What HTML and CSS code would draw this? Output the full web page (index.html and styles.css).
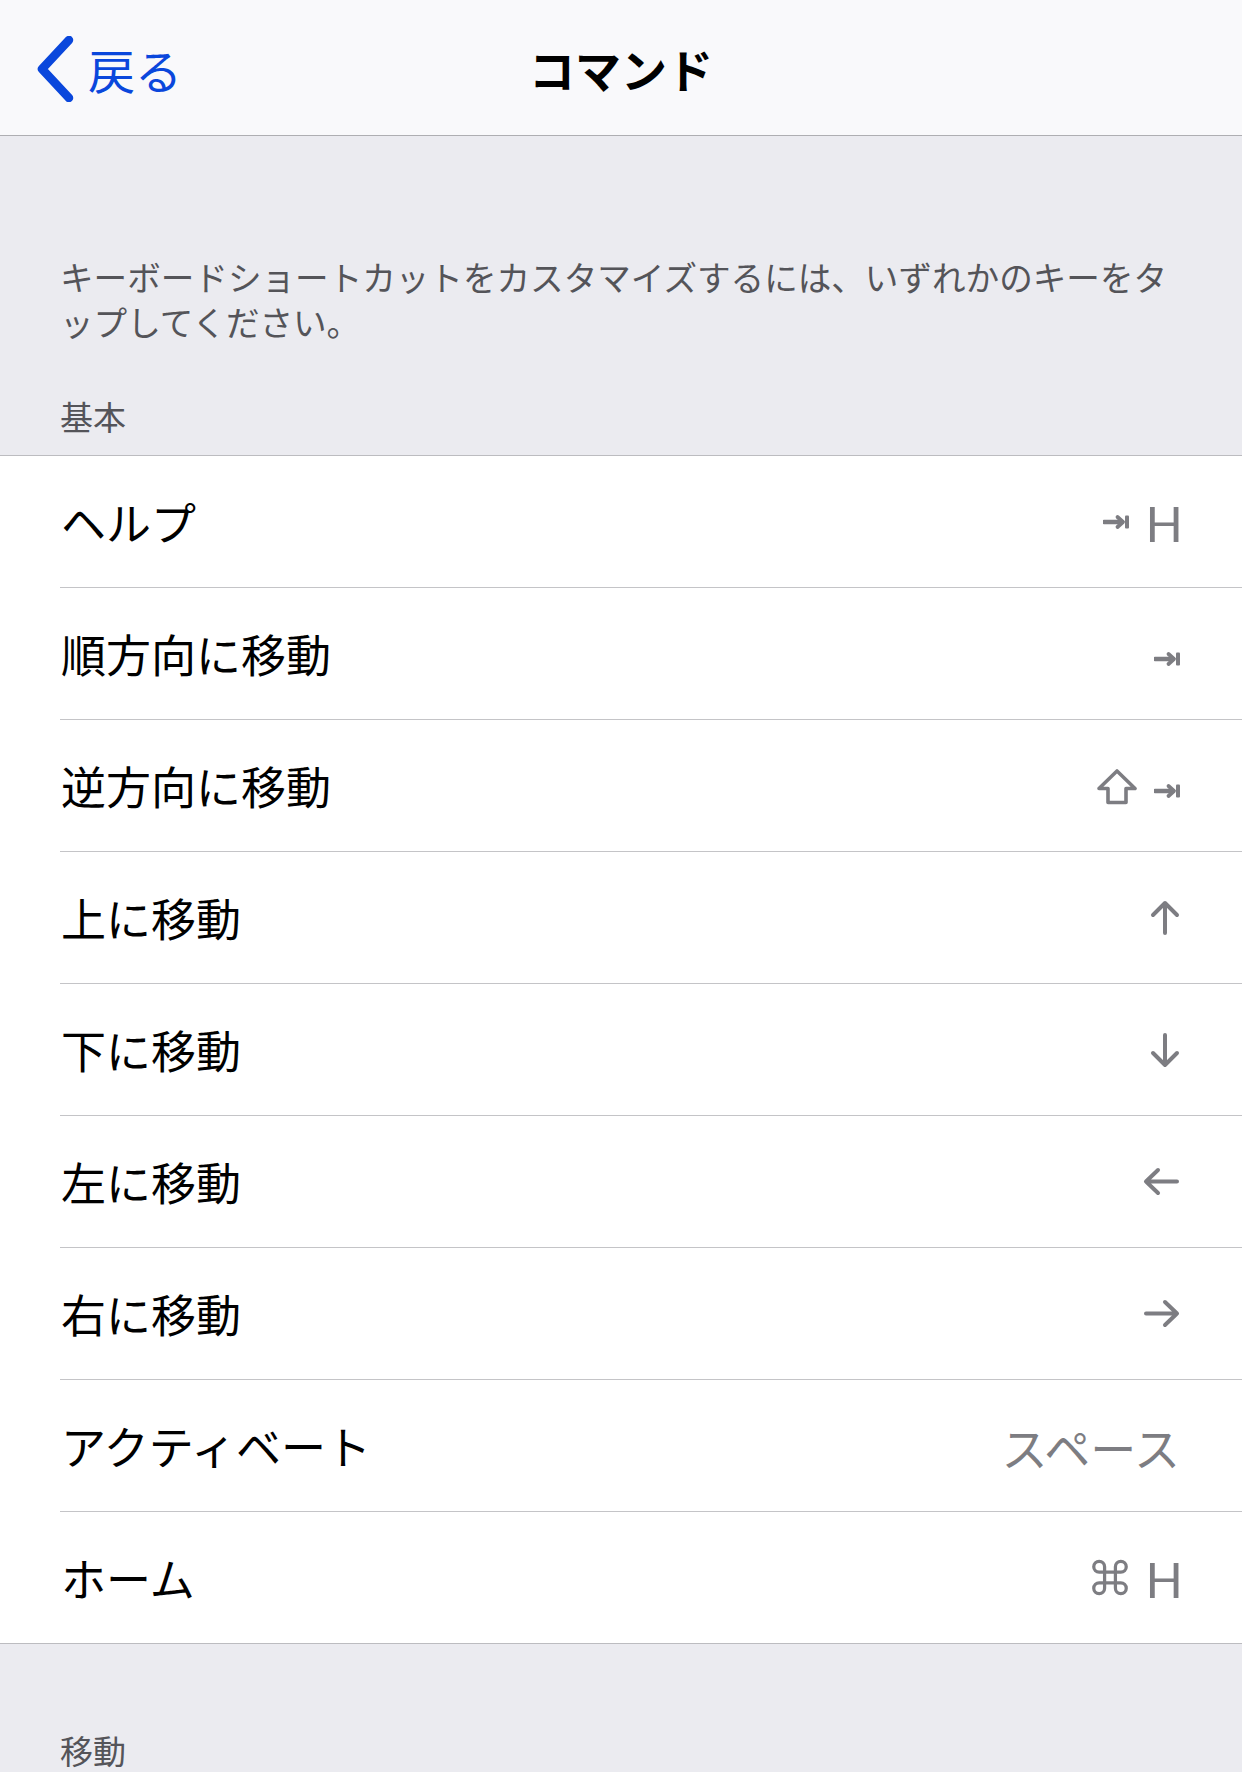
FILE: index.html
```html
<!DOCTYPE html>
<html lang="ja">
<head>
<meta charset="utf-8">
<title>コマンド</title>
<link rel="stylesheet" href="styles.css">
</head>
<body>
<header class="nav">
  <div class="back">
    <svg class="chev" width="44" height="66" viewBox="0 0 44 66"><path d="M35 4 L8 33 L35 62" fill="none" stroke="#0a47dc" stroke-width="8.5" stroke-linecap="round" stroke-linejoin="round"/></svg>
    <span class="back-label">戻る</span>
  </div>
  <h1 class="title">コマンド</h1>
</header>

<section class="group-head">
  <p class="footnote">キーボードショートカットをカスタマイズするには、いずれかのキーをタ<br>ップしてください。</p>
  <h2 class="section-title">基本</h2>
</section>

<ul class="list">
  <li class="row"><div class="row-inner"><span class="label">ヘルプ</span><span class="value">
    <svg class="tab" width="26" height="16" viewBox="0 0 26 16"><path d="M1 8 H19" stroke="#7d7d82" stroke-width="4.5" stroke-linecap="round"/><path d="M14.5 3 L20 8 L14.5 13" fill="none" stroke="#7d7d82" stroke-width="3.8" stroke-linecap="round" stroke-linejoin="round"/><rect x="22" y="1.5" width="4" height="13" rx="1" fill="#7d7d82"/></svg>
    <span class="key">H</span></span></div></li>
  <li class="row"><div class="row-inner"><span class="label">順方向に移動</span><span class="value">
    <svg class="tab low" width="26" height="16" viewBox="0 0 26 16"><path d="M1 8 H19" stroke="#7d7d82" stroke-width="4.5" stroke-linecap="round"/><path d="M14.5 3 L20 8 L14.5 13" fill="none" stroke="#7d7d82" stroke-width="3.8" stroke-linecap="round" stroke-linejoin="round"/><rect x="22" y="1.5" width="4" height="13" rx="1" fill="#7d7d82"/></svg>
  </span></div></li>
  <li class="row"><div class="row-inner"><span class="label">逆方向に移動</span><span class="value">
    <svg class="shift" width="40" height="36" viewBox="0 0 40 36"><path d="M20 2 L38 19.5 H29 V33.5 H11 V19.5 H2 Z" fill="none" stroke="#7d7d82" stroke-width="3.6" stroke-linejoin="round"/></svg>
    <svg class="tab low" width="26" height="16" viewBox="0 0 26 16"><path d="M1 8 H19" stroke="#7d7d82" stroke-width="4.5" stroke-linecap="round"/><path d="M14.5 3 L20 8 L14.5 13" fill="none" stroke="#7d7d82" stroke-width="3.8" stroke-linecap="round" stroke-linejoin="round"/><rect x="22" y="1.5" width="4" height="13" rx="1" fill="#7d7d82"/></svg>
  </span></div></li>
  <li class="row"><div class="row-inner"><span class="label">上に移動</span><span class="value">
    <svg width="30" height="36" viewBox="0 0 30 36"><path d="M15 3 V33 M3 15 L15 3 L27 15" fill="none" stroke="#7d7d82" stroke-width="4" stroke-linecap="round" stroke-linejoin="round"/></svg>
  </span></div></li>
  <li class="row"><div class="row-inner"><span class="label">下に移動</span><span class="value">
    <svg width="30" height="36" viewBox="0 0 30 36"><path d="M15 3 V33 M3 21 L15 33 L27 21" fill="none" stroke="#7d7d82" stroke-width="4" stroke-linecap="round" stroke-linejoin="round"/></svg>
  </span></div></li>
  <li class="row"><div class="row-inner"><span class="label">左に移動</span><span class="value">
    <svg width="37" height="29" viewBox="0 0 37 29"><path d="M3 14.5 H34 M15 3 L3 14.5 L15 26" fill="none" stroke="#7d7d82" stroke-width="4" stroke-linecap="round" stroke-linejoin="round"/></svg>
  </span></div></li>
  <li class="row"><div class="row-inner"><span class="label">右に移動</span><span class="value">
    <svg width="37" height="29" viewBox="0 0 37 29"><path d="M3 14.5 H34 M22 3 L34 14.5 L22 26" fill="none" stroke="#7d7d82" stroke-width="4" stroke-linecap="round" stroke-linejoin="round"/></svg>
  </span></div></li>
  <li class="row"><div class="row-inner"><span class="label">アクティベート</span><span class="value"><span class="vtext">スペース</span></span></div></li>
  <li class="row"><div class="row-inner"><span class="label">ホーム</span><span class="value">
    <svg width="38" height="37" viewBox="-2.5 -2.5 41 41"><path d="M12 12 V6 A6 6 0 1 0 6 12 H30 A6 6 0 1 0 24 6 V30 A6 6 0 1 0 30 24 H6 A6 6 0 1 0 12 30 Z" fill="none" stroke="#7d7d82" stroke-width="3.6" stroke-linejoin="round"/></svg>
    <span class="key">H</span></span></div></li>
</ul>

<section class="group-head next">
  <h2 class="section-title">移動</h2>
</section>
</body>
</html>
```

FILE: styles.css
```css
* { box-sizing: border-box; }
html, body { margin: 0; padding: 0; }
body {
  width: 1242px;
  height: 1772px;
  overflow: hidden;
  background: #ebebf0;
  font-family: "Noto Sans CJK JP", "Noto Sans", sans-serif;
  color: #000;
}

.nav {
  height: 136px;
  background: #f9f9fb;
  border-bottom: 1px solid #aeaeb2;
  display: grid;
  grid-template-columns: 1fr auto 1fr;
  align-items: center;
}
.back {
  display: flex;
  align-items: center;
  padding-left: 34px;
  gap: 10px;
  color: #0a47dc;
  margin-top: 2px;
}
.back-label {
  font-size: 47px;
  line-height: 60px;
}
.title {
  grid-column: 2;
  margin: 0;
  font-size: 46px;
  font-weight: 700;
  line-height: 60px;
}

.group-head {
  padding: 118px 60px 19px 60px;
}
.footnote {
  margin: 0;
  font-size: 33.6px;
  line-height: 45px;
  color: #545459;
}
.section-title {
  margin: 52px 0 0 0;
  font-size: 33px;
  font-weight: 400;
  line-height: 40px;
  color: #545459;
}
.group-head.next {
  padding-top: 86px;
}
.group-head.next .section-title { margin-top: 0; }

.list {
  list-style: none;
  margin: 0;
  padding: 0;
  background: #fff;
  border-top: 1px solid #bcbcc0;
  border-bottom: 1px solid #bcbcc0;
}
.row {
  padding-left: 60px;
}
.row-inner {
  height: 132px;
  display: flex;
  align-items: center;
  justify-content: space-between;
  padding-right: 62px;
  border-bottom: 1px solid #c4c4c7;
}
.row:last-child .row-inner {
  height: 131px;
  border-bottom: none;
}
.label {
  font-size: 45px;
  line-height: 56px;
  margin-left: 1px;
}
.value {
  display: flex;
  align-items: center;
  gap: 17px;
  color: #7d7d82;
}
.value svg { display: block; }
.tab.low { margin-top: 10px; }
.shift { margin-top: 2px; }
.key {
  font-family: Lato, "Noto Sans", sans-serif;
  font-weight: 400;
  font-size: 49px;
  line-height: 50px;
  margin-top: 2px;
  margin-right: -3px;
}
.vtext {
  font-size: 46px;
  line-height: 56px;
}
```
